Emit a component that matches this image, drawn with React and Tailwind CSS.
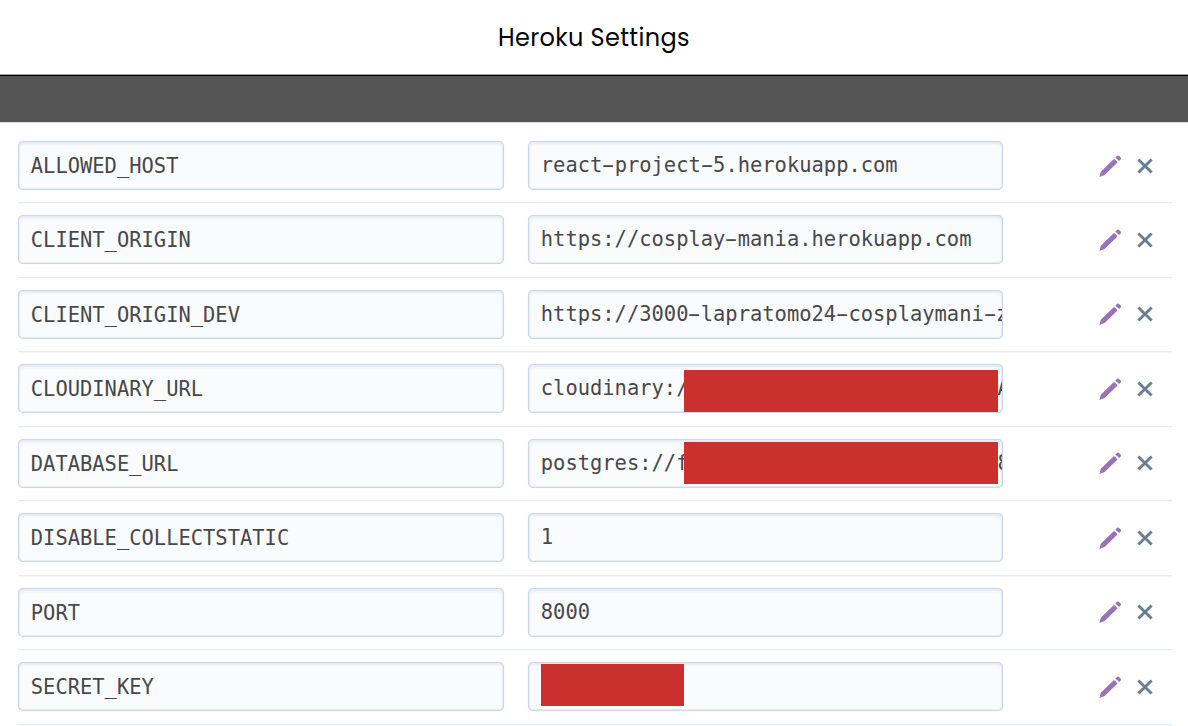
const rows = [
  { name: "ALLOWED_HOST", value: "react-project-5.herokuapp.com" },
  { name: "CLIENT_ORIGIN", value: "https://cosplay-mania.herokuapp.com" },
  { name: "CLIENT_ORIGIN_DEV", value: "https://3000-lapratomo24-cosplaymani-z" },
  { name: "CLOUDINARY_URL", value: "cloudinary:/", tail: "A", mask: "left-[155px] top-[5px] h-[42px] w-[314px]" },
  { name: "DATABASE_URL", value: "postgres://f", tail: "8", mask: "left-[155px] top-[2px] h-[42px] w-[314px]" },
  { name: "DISABLE_COLLECTSTATIC", value: "1" },
  { name: "PORT", value: "8000" },
  { name: "SECRET_KEY", value: "", mask: "left-[12px] top-[1px] h-[42px] w-[143px]" },
];

const field =
  "relative h-[49px] shrink-0 rounded-[5px] border border-[#ced7e7] bg-[#fafbfd] shadow-[inset_0_2px_3px_#e4eaf3,inset_0_0_0_1px_#e9eef6,0_0_1px_#d3dbe9]";
const fieldText =
  "block overflow-hidden whitespace-pre pl-[12.3px] text-[20.46px] leading-[46px] text-[#48484a]";

function Pencil() {
  return (
    <svg className="h-[24px] w-[24px]" viewBox="0 0 24 24" fill="#9873b8">
      <path d="M1.4 23.1 L2.8 17.8 L15.4 5.5 Q16.2 4.8 17 5.6 L19.1 7.7 Q19.7 8.4 19 9.1 L6.6 21.1 Z" />
      <path d="M17.4 3.5 L18.9 1.9 Q20 1 21.1 2 L22.6 3.5 Q23.5 4.6 22.6 5.6 L21.1 7.1 Z" />
    </svg>
  );
}

function Cross() {
  return (
    <svg className="h-[16px] w-[16px]" viewBox="0 0 16 16" fill="none" stroke="#667d95" strokeWidth="2.8">
      <path d="M1.4 1.4 L14.6 14.6 M14.6 1.4 L1.4 14.6" />
    </svg>
  );
}

// Draws hyphens at the full width of their monospace cell.
function MonoValue({ text }) {
  return text.split(/(-)/).map((part, i) =>
    part === "-" ? (
      <span key={i} className="inline-block scale-x-[1.85]">
        -
      </span>
    ) : (
      part
    ),
  );
}

function Row({ row }) {
  return (
    <div className="flex h-[74.45px] border-b border-[#e5ebf3] pt-[12px] shadow-[0_1px_0_#f7f9fc]">
      <div className={`${field} w-[486px]`}>
        <span className={`${fieldText} pt-[1px]`}>{row.name}</span>
      </div>
      <div className={`${field} ml-[24px] w-[475px]`}>
        <span className={fieldText}>
          <MonoValue text={row.value} />
        </span>
        {row.tail && (
          <span className="absolute right-0 top-0 w-[4px] overflow-hidden text-[20.46px] leading-[46px] text-[#48484a]">
            {row.tail}
          </span>
        )}
        {row.mask && <div className={`absolute bg-[#c9302e] ${row.mask}`} />}
      </div>
      <div className="ml-[95px] flex h-[49px] items-center gap-[15px]">
        <Pencil />
        <Cross />
      </div>
    </div>
  );
}

export default function App() {
  return (
    <div className="h-[726px] w-[1188px] overflow-hidden bg-white">
      <h1 className="flex h-[75px] items-center justify-center border-b border-[#a0a0a0] pt-[2px] font-['Poppins','Inter',sans-serif] text-[24px] font-normal tracking-[0.36px] text-black">
        Heroku Settings
      </h1>
      <div className="h-[48px] border-b border-t border-b-[#dddddd] border-t-black bg-[#545454]" />
      <div className="pl-[17.5px] pr-[16px] pt-[6px] font-['DejaVu_Sans_Mono',monospace]">
        {rows.map((row) => (
          <Row key={row.name} row={row} />
        ))}
      </div>
    </div>
  );
}
